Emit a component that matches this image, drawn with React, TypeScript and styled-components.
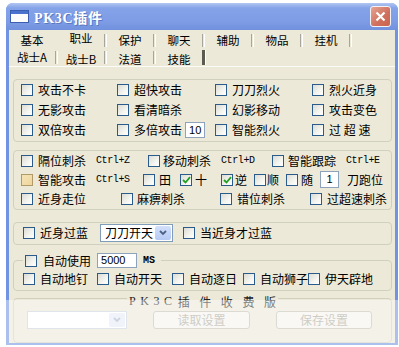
import React from "react";
import styled, { createGlobalStyle } from "styled-components";

const GlobalStyle = createGlobalStyle`
  html, body { margin: 0; padding: 0; background: #fff; }
  body {
    font-family: "Noto Sans CJK SC", "Liberation Sans", sans-serif;
    font-size: 12px;
    color: #000;
  }
`;

const Window = styled.div`
  position: relative;
  margin: 3px 0 0 6px;
  width: 392px;
  height: 342px;
  display: flex;
  flex-direction: column;
  background: #7193e2;
  border-radius: 7px 7px 0 0;
  overflow: hidden;
`;

const TitleBar = styled.div`
  height: 27px;
  flex: none;
  display: flex;
  align-items: center;
  padding: 0 7px 0 4px;
  background: linear-gradient(#b3c7f2 0%, #85a3e8 18%, #7d9ce5 70%, #7191de 100%);
`;

const TitleText = styled.span`
  margin-left: 5px;
  color: #fff;
  font-family: "Liberation Serif", "Noto Sans CJK SC", serif;
  font-weight: bold;
  font-size: 14px;
  letter-spacing: 0.7px;
  text-shadow: 1px 1px 0 #5a78c0;
`;

const CloseButton = styled.div`
  margin-left: auto;
  width: 19px;
  height: 19px;
  border: 1px solid #f3f3f7;
  border-radius: 3px;
  background: linear-gradient(135deg, #e6a493, #cf6f5c 60%, #c9654f);
  display: flex;
  align-items: center;
  justify-content: center;
`;

const Frame = styled.div`
  flex: 1;
  margin: 0 3px 3px 3px;
  background: #ece9d8;
  display: flex;
  flex-direction: column;
`;

const TabBar = styled.div`
  padding-top: 2px;
  height: 34px;
  flex: none;
`;

const TabRow = styled.div<{ $h: number }>`
  display: flex;
  height: ${(p) => p.$h}px;
  align-items: center;
`;

const Tab = styled.div<{ $shift: number }>`
  width: 46px;
  text-align: center;
  font-size: 11.5px;
  line-height: 13px;
  position: relative;
  top: ${(p) => p.$shift}px;
`;

const Sep = styled.div<{ $hidden?: boolean; $dark?: boolean }>`
  width: ${(p) => (p.$dark ? 2 : 1)}px;
  height: ${(p) => (p.$dark ? 15 : 13)}px;
  background: ${(p) => (p.$dark ? "#5c5b52" : "transparent")};
  border-left: 1px solid ${(p) => (p.$hidden ? "transparent" : p.$dark ? "#5c5b52" : "#a7a699")};
  border-right: 1px solid ${(p) => (p.$hidden ? "transparent" : "#fff")};
`;

const Panel = styled.div`
  flex: 1;
  border-top: 1px solid #fbfbf8;
  padding: 12px 3px 0 4px;
  display: flex;
  flex-direction: column;
`;

const Group = styled.div<{ $mt?: number }>`
  margin-top: ${(p) => p.$mt ?? 0}px;
  border: 1px solid #d0d0bf;
  border-radius: 4px;
  padding: 0 0 1px 0;
`;

const Grid = styled.div`
  display: grid;
  grid-template-columns: 96px 98px 97px auto;
  grid-auto-rows: 20px;
  padding-left: 7px;
  align-items: center;
`;

const Row = styled.div<{ $h?: number; $pl?: number }>`
  display: flex;
  align-items: center;
  height: ${(p) => p.$h ?? 19}px;
  padding-left: ${(p) => p.$pl ?? 7}px;
`;

const ButtonRow = styled(Row)`
  align-items: flex-start;
  padding-top: 5px;
`;

const Fieldset = styled.fieldset<{ $mt?: number }>`
  margin: ${(p) => p.$mt ?? 0}px 0 0 0;
  padding: 0 0 1px 0;
  border: 1px solid #d0d0bf;
  border-radius: 4px;
  min-width: 0;
`;

const Legend = styled.legend<{ $center?: boolean }>`
  padding: 0 2px;
  margin: ${(p) => (p.$center ? "0 auto" : "0 0 0 9px")};
  height: 15px;
`;

const LegendInner = styled.div`
  display: flex;
  align-items: center;
  height: 15px;
  padding-right: 4px;
`;

const Item = styled.div<{ $w?: number; $ml?: number }>`
  display: flex;
  align-items: center;
  flex: none;
  ${(p) => (p.$w ? `width: ${p.$w}px;` : "")}
  margin-left: ${(p) => p.$ml ?? 0}px;
  white-space: nowrap;
`;

const Box = styled.span<{ $hot?: boolean }>`
  width: 10px;
  height: 10px;
  flex: none;
  border: 1px solid ${(p) => (p.$hot ? "#b19a6a" : "#2a5b8a")};
  background: ${(p) =>
    p.$hot
      ? "linear-gradient(135deg, #f5e2b5, #f0d69e)"
      : "linear-gradient(135deg, #dcdcd4, #f4f4f0 60%, #ffffff)"};
  display: flex;
  align-items: center;
  justify-content: center;
`;

const Label = styled.span<{ $gap?: number }>`
  margin-left: ${(p) => p.$gap ?? 5}px;
  line-height: 14px;
`;

const Hotkey = styled.span`
  margin-left: 10px;
  font-family: "Liberation Mono", monospace;
  font-size: 10px;
  letter-spacing: -0.4px;
`;

const TextBox = styled.div<{ $w: number; $ml?: number; $h?: number }>`
  width: ${(p) => p.$w}px;
  height: ${(p) => p.$h ?? 16}px;
  margin-left: ${(p) => p.$ml ?? 0}px;
  box-sizing: border-box;
  flex: none;
  background: #fff;
  border: 1px solid #8da3bb;
  font-family: "Liberation Sans", sans-serif;
  font-size: 11px;
  line-height: ${(p) => (p.$h ?? 16) - 2}px;
  padding-left: 3px;
`;

const CenterBox = styled(TextBox)`
  padding: 0;
  text-align: center;
`;

const Units = styled.span`
  margin-left: 6px;
  font-family: "Liberation Mono", monospace;
  font-weight: bold;
  font-size: 10px;
`;

const Plain = styled.span<{ $ml?: number }>`
  margin-left: ${(p) => p.$ml ?? 0}px;
`;

const Select = styled.div<{ $w: number; $disabled?: boolean; $ml?: number }>`
  width: ${(p) => p.$w}px;
  height: 18px;
  margin-left: ${(p) => p.$ml ?? 0}px;
  box-sizing: border-box;
  flex: none;
  display: flex;
  align-items: center;
  background: #fff;
  border: 1px solid ${(p) => (p.$disabled ? "#cbd2dc" : "#7f9db9")};
  padding: 0 1px 0 4px;
`;

const SelectText = styled.span`
  flex: 1;
  line-height: 14px;
`;

const SelectArrow = styled.div<{ $disabled?: boolean }>`
  width: 16px;
  height: 14px;
  border-radius: 2px;
  background: ${(p) => (p.$disabled ? "#e6ebf4" : "linear-gradient(#d3e0fb, #b6caf5)")};
  display: flex;
  align-items: center;
  justify-content: center;
`;

const Button = styled.div<{ $w: number; $ml: number }>`
  width: ${(p) => p.$w}px;
  height: 18px;
  margin-left: ${(p) => p.$ml}px;
  box-sizing: border-box;
  border: 1px solid #c2c0b4;
  border-radius: 3px;
  background: #f4f3ee;
  color: #aca899;
  text-align: center;
  line-height: 16px;
`;

const PaidTitle = styled.span`
  display: inline-flex;
  align-items: center;
  height: 15px;
  color: #222;
`;

const Latin = styled.span`
  font-family: "Liberation Serif", serif;
  font-size: 12px;
  letter-spacing: 4.6px;
  margin-right: 1px;
`;

const Wide = styled.span`
  letter-spacing: 9.6px;
  margin-right: -9.6px;
`;

const Fade = styled.div`
  position: absolute;
  left: 0;
  right: 0;
  top: 297px;
  bottom: 0;
  background: rgba(255, 255, 255, 0.42);
  pointer-events: none;
`;

const Tick = () => (
  <svg width="9" height="8" viewBox="0 0 9 8">
    <path d="M1 4 L3.5 6.5 L8 1.2" fill="none" stroke="#22a122" strokeWidth="1.8" />
  </svg>
);

const Chevron = ({ color }: { color: string }) => (
  <svg width="8" height="6" viewBox="0 0 8 6">
    <path d="M1 1 L4 4 L7 1" fill="none" stroke={color} strokeWidth="1.8" />
  </svg>
);

type CheckProps = {
  label: string;
  checked?: boolean;
  hot?: boolean;
  w?: number;
  gap?: number;
  hotkey?: string;
};

const Check = ({ label, checked, hot, w, gap, hotkey }: CheckProps) => (
  <Item $w={w}>
    <Box $hot={hot}>{checked && <Tick />}</Box>
    <Label $gap={gap}>{label}</Label>
    {hotkey && <Hotkey>{hotkey}</Hotkey>}
  </Item>
);

const TOP_TABS = ["基本", "职业", "保护", "聊天", "辅助", "物品", "挂机"];
const SUB_TABS = ["战士A", "战士B", "法道", "技能"];

const App = () => (
  <>
    <GlobalStyle />
    <Window>
      <TitleBar>
        <svg width="19" height="13" viewBox="0 0 19 13">
          <rect x="0.5" y="0.5" width="18" height="12" fill="#fdfdfd" stroke="#3a5fb0" />
          <rect x="1" y="1" width="17" height="3" fill="#4a72cf" />
        </svg>
        <TitleText>PK3C插件</TitleText>
        <CloseButton>
          <svg width="11" height="11" viewBox="0 0 11 11">
            <path d="M1.5 1.5 L9.5 9.5 M9.5 1.5 L1.5 9.5" stroke="#fff" strokeWidth="2.2" />
          </svg>
        </CloseButton>
      </TitleBar>
      <Frame>
        <TabBar>
          <TabRow $h={16}>
            {TOP_TABS.map((t, i) => (
              <React.Fragment key={t}>
                <Tab $shift={i === 1 ? -2 : 0}>{t}</Tab>
                <Sep $hidden={i === 0} />
              </React.Fragment>
            ))}
          </TabRow>
          <TabRow $h={18}>
            {SUB_TABS.map((t, i) => (
              <React.Fragment key={t}>
                <Tab $shift={i === 0 ? 0 : 2}>{t}</Tab>
                <Sep $dark={i === 3} />
              </React.Fragment>
            ))}
          </TabRow>
        </TabBar>
        <Panel>
          <Group>
            <Grid>
              <Check label="攻击不卡" />
              <Check label="超快攻击" />
              <Check label="刀刀烈火" />
              <Check label="烈火近身" />
              <Check label="无影攻击" />
              <Check label="看清暗杀" />
              <Check label="幻影移动" />
              <Check label="攻击变色" />
              <Check label="双倍攻击" />
              <Item>
                <Check label="多倍攻击" />
                <TextBox $w={20} $ml={3}>10</TextBox>
              </Item>
              <Check label="智能烈火" />
              <Check label="过 超 速" />
            </Grid>
          </Group>

          <Group $mt={8}>
            <Row>
              <Check label="隔位刺杀" hotkey="Ctrl+Z" w={127} />
              <Check label="移动刺杀" hotkey="Ctrl+D" w={124} gap={3} />
              <Check label="智能跟踪" hotkey="Ctrl+E" gap={4} />
            </Row>
            <Row>
              <Check label="智能攻击" hotkey="Ctrl+S" hot w={122} />
              <Check label="田" w={37} gap={4} />
              <Check label="十" checked w={41} gap={3} />
              <Check label="逆" checked w={33} gap={2} />
              <Check label="顺" w={32} gap={1} />
              <Check label="随" w={34} gap={3} />
              <CenterBox $w={19} $h={17}>1</CenterBox>
              <Plain $ml={8}>刀跑位</Plain>
            </Row>
            <Row>
              <Check label="近身走位" w={100} />
              <Check label="麻痹刺杀" w={99} gap={4} />
              <Check label="错位刺杀" w={90} />
              <Check label="过超速刺杀" />
            </Row>
          </Group>

          <Group $mt={12}>
            <Row $h={20} $pl={9}>
              <Check label="近身过蓝" w={77} />
              <Select $w={73}>
                <SelectText>刀刀开天</SelectText>
                <SelectArrow>
                  <Chevron color="#4d6185" />
                </SelectArrow>
              </Select>
              <Item $ml={10}>
                <Check label="当近身才过蓝" />
              </Item>
            </Row>
          </Group>

          <Fieldset $mt={8}>
            <Legend>
              <LegendInner>
                <Check label="自动使用" gap={6} />
                <TextBox $w={40} $ml={6} $h={15}>5000</TextBox>
                <Units>MS</Units>
              </LegendInner>
            </Legend>
            <Row $pl={9} $h={21}>
              <Check label="自动地钉" w={74} />
              <Check label="自动开天" w={75} />
              <Check label="自动逐日" w={71} />
              <Check label="自动狮子" w={65} />
              <Check label="伊天辟地" />
            </Row>
          </Fieldset>

          <Fieldset $mt={0}>
            <Legend $center>
              <PaidTitle>
                <Latin>PK3C</Latin>
                <Wide>插件收费版</Wide>
              </PaidTitle>
            </Legend>
            <ButtonRow $pl={13} $h={30}>
              <Select $w={100} $disabled>
                <SelectText />
                <SelectArrow $disabled>
                  <Chevron color="#a9b6cc" />
                </SelectArrow>
              </Select>
              <Button $w={97} $ml={26}>读取设置</Button>
              <Button $w={96} $ml={26}>保存设置</Button>
            </ButtonRow>
          </Fieldset>
        </Panel>
      </Frame>
      <Fade />
    </Window>
  </>
);

export default App;
